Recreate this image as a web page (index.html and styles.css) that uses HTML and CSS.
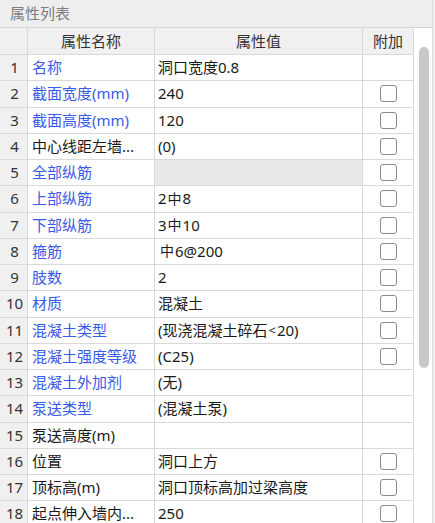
FILE: index.html
```html
<!DOCTYPE html>
<html>
<head>
<meta charset="utf-8">
<link rel="stylesheet" href="styles.css">
</head>
<body>
<div class="panel">
  <div class="title">属性列表</div>
  <div class="main">
    <div class="grid">
      <div class="hd"></div><div class="hd">属性名称</div><div class="hd">属性值</div><div class="hd">附加</div>

      <div class="num">1</div><div class="name blue">名称</div><div class="val">洞口宽度0.8</div><div class="chk"></div>
      <div class="num">2</div><div class="name blue">截面宽度(mm)</div><div class="val">240</div><div class="chk"><span class="box"></span></div>
      <div class="num">3</div><div class="name blue">截面高度(mm)</div><div class="val">120</div><div class="chk"><span class="box"></span></div>
      <div class="num">4</div><div class="name">中心线距左墙...</div><div class="val">(0)</div><div class="chk"><span class="box"></span></div>
      <div class="num">5</div><div class="name blue">全部纵筋</div><div class="val ro"></div><div class="chk"><span class="box"></span></div>
      <div class="num">6</div><div class="name blue">上部纵筋</div><div class="val">2<span class="bar">中</span>8</div><div class="chk"><span class="box"></span></div>
      <div class="num">7</div><div class="name blue">下部纵筋</div><div class="val">3<span class="bar">中</span>10</div><div class="chk"><span class="box"></span></div>
      <div class="num">8</div><div class="name blue">箍筋</div><div class="val"><span class="bar first">中</span>6@200</div><div class="chk"><span class="box"></span></div>
      <div class="num">9</div><div class="name blue">肢数</div><div class="val">2</div><div class="chk"><span class="box"></span></div>
      <div class="num">10</div><div class="name blue">材质</div><div class="val">混凝土</div><div class="chk"><span class="box"></span></div>
      <div class="num">11</div><div class="name blue">混凝土类型</div><div class="val">(现浇混凝土碎石<span class="lt">&lt;</span>20)</div><div class="chk"><span class="box"></span></div>
      <div class="num">12</div><div class="name blue">混凝土强度等级</div><div class="val">(C25)</div><div class="chk"><span class="box"></span></div>
      <div class="num">13</div><div class="name blue">混凝土外加剂</div><div class="val">(无)</div><div class="chk"></div>
      <div class="num">14</div><div class="name blue">泵送类型</div><div class="val">(混凝土泵)</div><div class="chk"></div>
      <div class="num">15</div><div class="name">泵送高度(m)</div><div class="val"></div><div class="chk"></div>
      <div class="num">16</div><div class="name">位置</div><div class="val">洞口上方</div><div class="chk"><span class="box"></span></div>
      <div class="num">17</div><div class="name">顶标高(m)</div><div class="val">洞口顶标高加过梁高度</div><div class="chk"><span class="box"></span></div>
      <div class="num">18</div><div class="name">起点伸入墙内...</div><div class="val">250</div><div class="chk"><span class="box"></span></div>
    </div>
    <div class="scroll"><div class="thumb"></div></div>
  </div>
</div>
</body>
</html>
```

FILE: styles.css
```css
html, body {
  margin: 0;
  padding: 0;
  width: 435px;
  height: 523px;
  overflow: hidden;
  background: #f2f2f2;
  font-family: "Noto Sans", "Noto Sans CJK SC", sans-serif;
  font-size: 15px;
  color: #1a1a1a;
}

.panel {
  width: 432px;
  height: 523px;
  background: #ffffff;
  border-right: 1px solid #dcdcdc;
  display: flex;
  flex-direction: column;
}

.title {
  height: 27px;
  flex: none;
  background: #eeeeee;
  border-bottom: 1px solid #d2d2d2;
  color: #7d7d7d;
  padding-left: 10px;
  line-height: 27px;
  box-sizing: content-box;
}

.main {
  display: flex;
  flex: 1;
  min-height: 0;
}

.grid {
  display: grid;
  grid-template-columns: 27px 126px 207px 50px;
  grid-template-rows: 26px;
  grid-auto-rows: 25.25px;
  gap: 1px;
  background: #d9d9d9;
  border-right: 1px solid #d9d9d9;
  align-content: start;
  width: 413px;
  flex: none;
}

.grid > div {
  background: #ffffff;
  display: flex;
  align-items: center;
  white-space: nowrap;
  overflow: hidden;
  line-height: 1;
}

.grid > .hd {
  background: #f0f0f0;
  justify-content: center;
  color: #333333;
}

.grid > .num {
  background: #f0f0f0;
  justify-content: center;
  padding-left: 2px;
  color: #333333;
}

.grid > .name {
  padding-left: 4px;
  color: #1a1a1a;
}

.grid > .name.blue {
  color: #3a5ae8;
}

.grid > .val {
  padding-left: 3px;
  color: #1a1a1a;
}

.grid > .val.ro {
  background: #e9e9e9;
}

.grid > .chk {
  justify-content: center;
}

.bar {
  font-family: "Noto Sans CJK SC", sans-serif;
  font-size: 14px;
  position: relative;
  top: -1px;
  margin: 0 1px;
}

.bar.first {
  margin-left: 2px;
}

.lt {
  font-size: 13px;
  margin: 0 1px;
}

.box {
  width: 15px;
  height: 15px;
  border: 1px solid #8a8a8a;
  border-radius: 3px;
  background: #ffffff;
  margin-left: 1px;
}

.scroll {
  flex: 1;
  background: #ffffff;
  padding-top: 19px;
  padding-left: 5px;
}

.thumb {
  width: 10px;
  height: 321px;
  border-radius: 5px;
  background: #c8c8c8;
}
```
